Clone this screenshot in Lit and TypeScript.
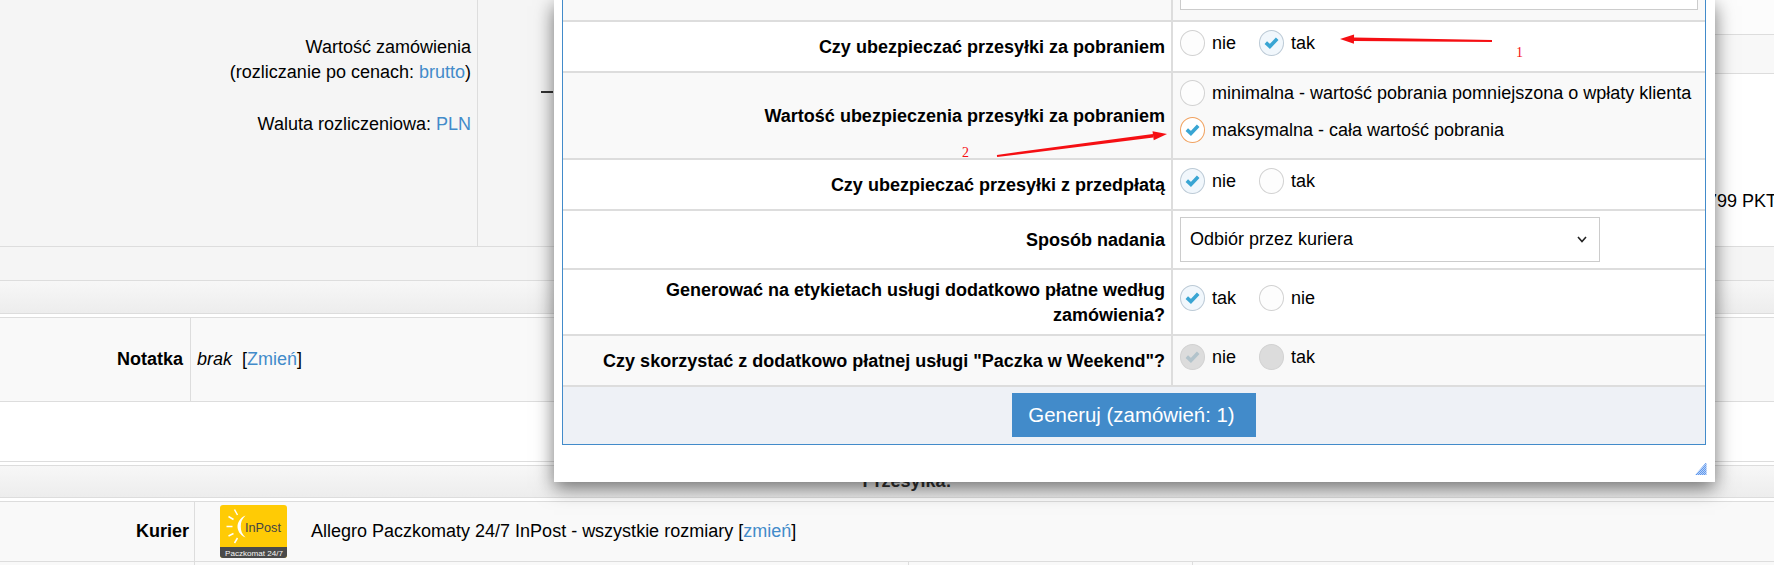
import { LitElement, html, css, svg } from "lit";
import { customElement } from "lit/decorators.js";

type RadioKind = "off" | "on" | "focus" | "dis-on" | "dis-off";

const radio = (kind: RadioKind) => html`<span class="radio ${kind}">
  ${kind === "on" || kind === "focus" || kind === "dis-on"
    ? html`<svg viewBox="0 0 25 25" width="25" height="25"><path d="M6.8 12.6 L10.9 16.4 L18.2 8.8" fill="none" stroke-width="3.6" stroke-linejoin="miter"></path></svg>`
    : ""}
</span>`;

const option = (kind: RadioKind, label: string) =>
  html`<label class="opt">${radio(kind)}<span>${label}</span></label>`;

const arrow = (x1: number, y1: number, x2: number, y2: number) => {
  const a = Math.atan2(y2 - y1, x2 - x1);
  const bx = x2 - Math.cos(a) * 14;
  const by = y2 - Math.sin(a) * 14;
  const nx = -Math.sin(a);
  const ny = Math.cos(a);
  return svg`
    <polygon points="${x1 - nx * 1.1},${y1 - ny * 1.1} ${x1 + nx * 1.1},${y1 + ny * 1.1} ${bx + nx * 1.8},${by + ny * 1.8} ${bx - nx * 1.8},${by - ny * 1.8}" fill="#f50f13"></polygon>
    <polygon points="${x2},${y2} ${bx + nx * 4.6},${by + ny * 4.6} ${bx - nx * 4.6},${by - ny * 4.6}" fill="#f50f13"></polygon>`;
};

@customElement("app-root")
export class AppRoot extends LitElement {
  static styles = css`
    :host {
      display: block;
      position: relative;
      width: 1774px;
      height: 565px;
      overflow: hidden;
      background: #fff;
      color: #000;
      font: 18px/25px "Liberation Sans", Arial, sans-serif;
    }
    * { box-sizing: border-box; }
    a { color: #428bca; text-decoration: none; }
    .line { border-bottom: 1px solid #ddd; }

    .top { display: flex; height: 247px; background: #f5f5f5; }
    .summary {
      width: 478px;
      border-right: 1px solid #ddd;
      padding: 35px 6px 0 0;
      text-align: right;
    }
    .summary p { margin: 0 0 27px; }
    .mid { flex: 1; padding: 91px 0 0 63px; }
    .dash { width: 12px; height: 2px; background: #333; }
    .totals { width: 174px; display: flex; flex-direction: column; background: #fff; }
    .t1 { height: 35px; background: #fcfcfc; }
    .t2 { height: 39px; background: #f8f8f8; }
    .t3 { flex: 1; padding: 115px 0 0 107px; white-space: nowrap; }

    .band { height: 34px; background: #f5f5f5; }
    .head {
      background: linear-gradient(#f7f7f7, #ededed);
      text-align: center;
      font-weight: bold;
      color: #333;
    }
    .head.h1 { height: 33px; }
    .head.h2 { height: 32px; padding: 3px 0 0 40px; }
    .gap { height: 4px; background: #fff; }

    .row { display: flex; align-items: center; background: #f9f9f9; }
    .row.note { height: 84px; }
    .row.courier { height: 60px; }
    .row .name {
      height: 100%;
      display: flex;
      align-items: center;
      justify-content: flex-end;
      font-weight: bold;
      border-right: 1px solid #ddd;
    }
    .note .name { width: 191px; padding-right: 7px; }
    .courier .name { width: 195px; padding-right: 5px; }
    .note .val { padding-left: 6px; }
    .note .val i { margin-right: 5px; }
    .courier .val { display: flex; align-items: center; padding-left: 25px; gap: 24px; }
    .logo { display: block; }
    .blank { height: 60px; background: #fff; }
    .bottom { display: flex; height: 3px; background: #f9f9f9; }
    .bottom div { border-right: 1px solid #ddd; }
    .b1 { width: 195px; }
    .b2 { width: 714px; }
    .b3 { width: 284px; }

    .dialog {
      position: absolute;
      left: 554px;
      top: 0;
      width: 1161px;
      height: 482px;
      background: #fff;
      padding: 0 9px 0 8px;
      box-shadow: 0 6px 18px rgba(0, 0, 0, 0.55);
    }
    .form {
      height: 445px;
      border: 1px solid #428bca;
      border-top: 0;
      display: flex;
      flex-direction: column;
    }
    .frow { display: flex; border-bottom: 2px solid #ddd; background: #fff; }
    .frow.alt { background: #f9f9f9; }
    .r0 { height: 22px; }
    .r1 { height: 51px; }
    .r2 { height: 87px; }
    .r3 { height: 51px; }
    .r4 { height: 59px; }
    .r5 { height: 66px; }
    .r6 { height: 51px; }
    .flabel {
      width: 610px;
      flex: none;
      border-right: 2px solid #ddd;
      padding: 1px 6px 0 10px;
      display: flex;
      align-items: center;
      justify-content: flex-end;
      text-align: right;
      font-weight: bold;
    }
    .fval { flex: 1; padding: 8px 0 0 7px; display: flex; align-items: flex-start; }
    .r2 .fval { padding-top: 7px; flex-direction: column; gap: 11px; }
    .r4 .fval { padding-top: 6px; }
    .r5 .fval { padding-top: 15px; }
    .r0 .fval { padding: 0 7px 0 7px; }
    .field {
      width: 100%;
      height: 10px;
      background: #fff;
      border: 1px solid #ccc;
      border-top: 0;
    }
    .opt { display: flex; align-items: center; gap: 7px; min-width: 79px; height: 26px; white-space: nowrap; }
    .radio {
      flex: none;
      width: 25px;
      height: 26px;
      border-radius: 50%;
      border: 1.5px solid #d2d2d2;
      background: #fdfdfd;
      position: relative;
      display: block;
    }
    .radio svg { position: absolute; left: -1.5px; top: -1.5px; }
    .radio path { stroke: #39a5d3; }
    .radio.on { border-color: #bccad6; background: #f1f7fc; }
    .radio.focus { border-color: #f0a260; background: #fff; }
    .radio.dis-on, .radio.dis-off { border-color: #d2d2d2; background: #dcdcdc; }
    .radio.dis-on path { stroke: #b2c3cb; }
    .select {
      width: 420px;
      height: 45px;
      border: 1px solid #ccc;
      background: #fff;
      padding: 0 12px 0 9px;
      display: flex;
      align-items: center;
      justify-content: space-between;
    }
    .footer { flex: 1; background: #eef1f6; padding-top: 6px; display: flex; justify-content: center; align-items: flex-start; }
    .btn {
      width: 244px;
      height: 44px;
      padding-right: 5px;
      background: #428bca;
      color: #fff;
      display: flex;
      align-items: center;
      justify-content: center;
      font-size: 20.4px;
    }
    .grip { position: absolute; right: 8px; bottom: 7px; display: block; }
    .marks { position: absolute; left: 0; top: 0; pointer-events: none; }
    .marks text { font: 14px "Liberation Serif", serif; fill: #f50f13; }
    .bracket { color: #000; }
  `;

  render() {
    return html`
      <div class="top line">
        <div class="summary">
          <p>Wartość zamówienia<br />(rozliczanie po cenach: <a>brutto</a>)</p>
          <p>Waluta rozliczeniowa: <a>PLN</a></p>
        </div>
        <div class="mid"><div class="dash"></div></div>
        <div class="totals">
          <div class="t1 line"></div>
          <div class="t2 line"></div>
          <div class="t3">799 PKT</div>
        </div>
      </div>
      <div class="band line"></div>
      <div class="head h1 line"></div>
      <div class="gap line"></div>
      <div class="row note line">
        <div class="name">Notatka</div>
        <div class="val"><i>brak</i> <span class="bracket">[</span><a>Zmień</a>]</div>
      </div>
      <div class="blank line"></div>
      <div class="gap line"></div>
      <div class="head h2 line">Przesyłka:</div>
      <div class="gap line"></div>
      <div class="row courier line">
        <div class="name">Kurier</div>
        <div class="val">
          <svg class="logo" width="67" height="53" viewBox="0 0 67 53">
            <rect width="67" height="53" rx="3" fill="#ffcb05"></rect>
            <path d="M0 42H67V50a3 3 0 0 1-3 3H3a3 3 0 0 1-3-3Z" fill="#4a4a4a"></path>
            <path d="M25.5 10.5C19.5 13 17.5 18 17.5 21.5S19.5 30 25.5 32.5C21.8 29 20.8 25.5 20.8 21.5S21.8 14 25.5 10.5Z" fill="#fff"></path>
            <g stroke="#fff" stroke-width="1.5" fill="none">
              <path d="M14.5 4.5L17.5 10"></path>
              <path d="M8.5 11.5L13.5 14.5"></path>
              <path d="M6.5 21.5H12.5"></path>
              <path d="M8.5 31L13.5 28.5"></path>
              <path d="M14.5 38L17.5 33"></path>
            </g>
            <text x="25" y="27" font-family="Liberation Sans, sans-serif" font-size="13.5" fill="#444" textLength="36" lengthAdjust="spacingAndGlyphs">InPost</text>
            <text x="5" y="50.5" font-family="Liberation Sans, sans-serif" font-size="8" fill="#f4f4f4" textLength="58" lengthAdjust="spacingAndGlyphs">Paczkomat 24/7</text>
          </svg>
          <div>Allegro Paczkomaty 24/7 InPost - wszystkie rozmiary <span>[</span><a>zmień</a>]</div>
        </div>
      </div>
      <div class="bottom"><div class="b1"></div><div class="b2"></div><div class="b3"></div></div>

      <div class="dialog">
        <div class="form">
          <div class="frow alt r0">
            <div class="flabel"></div>
            <div class="fval"><div class="field"></div></div>
          </div>
          <div class="frow r1">
            <div class="flabel">Czy ubezpieczać przesyłki za pobraniem</div>
            <div class="fval">${option("off", "nie")}${option("on", "tak")}</div>
          </div>
          <div class="frow alt r2">
            <div class="flabel">Wartość ubezpieczenia przesyłki za pobraniem</div>
            <div class="fval">
              ${option("off", "minimalna - wartość pobrania pomniejszona o wpłaty klienta")}
              ${option("focus", "maksymalna - cała wartość pobrania")}
            </div>
          </div>
          <div class="frow r3">
            <div class="flabel">Czy ubezpieczać przesyłki z przedpłatą</div>
            <div class="fval">${option("on", "nie")}${option("off", "tak")}</div>
          </div>
          <div class="frow r4">
            <div class="flabel">Sposób nadania</div>
            <div class="fval">
              <div class="select">
                <span>Odbiór przez kuriera</span>
                <svg width="10" height="7" viewBox="0 0 10 7"><path d="M1 1L5 5.5L9 1" fill="none" stroke="#222" stroke-width="1.6"></path></svg>
              </div>
            </div>
          </div>
          <div class="frow r5">
            <div class="flabel"><span>Generować na etykietach usługi dodatkowo płatne według<br />zamówienia?</span></div>
            <div class="fval">${option("on", "tak")}${option("off", "nie")}</div>
          </div>
          <div class="frow alt r6">
            <div class="flabel">Czy skorzystać z dodatkowo płatnej usługi "Paczka w Weekend"?</div>
            <div class="fval">${option("dis-on", "nie")}${option("dis-off", "tak")}</div>
          </div>
          <div class="footer"><div class="btn">Generuj (zamówień: 1)</div></div>
        </div>
        <svg class="grip" width="12" height="12" viewBox="0 0 12 12">
          <defs>
            <pattern id="dots" width="2" height="2" patternUnits="userSpaceOnUse">
              <rect width="2" height="2" fill="#b9d2f7"></rect>
              <rect width="1" height="1" fill="#5f98ee"></rect>
              <rect x="1" y="1" width="1" height="1" fill="#5f98ee"></rect>
            </pattern>
          </defs>
          <path d="M0 12L10.5 0L11.5 0V12Z" fill="url(#dots)"></path>
        </svg>
      </div>

      <svg class="marks" width="1774" height="565" viewBox="0 0 1774 565">
        ${arrow(1492, 41, 1340, 39)}
        ${arrow(997, 156, 1167, 134)}
        <text x="1516" y="57">1</text>
        <text x="962" y="157">2</text>
      </svg>
    `;
  }
}
